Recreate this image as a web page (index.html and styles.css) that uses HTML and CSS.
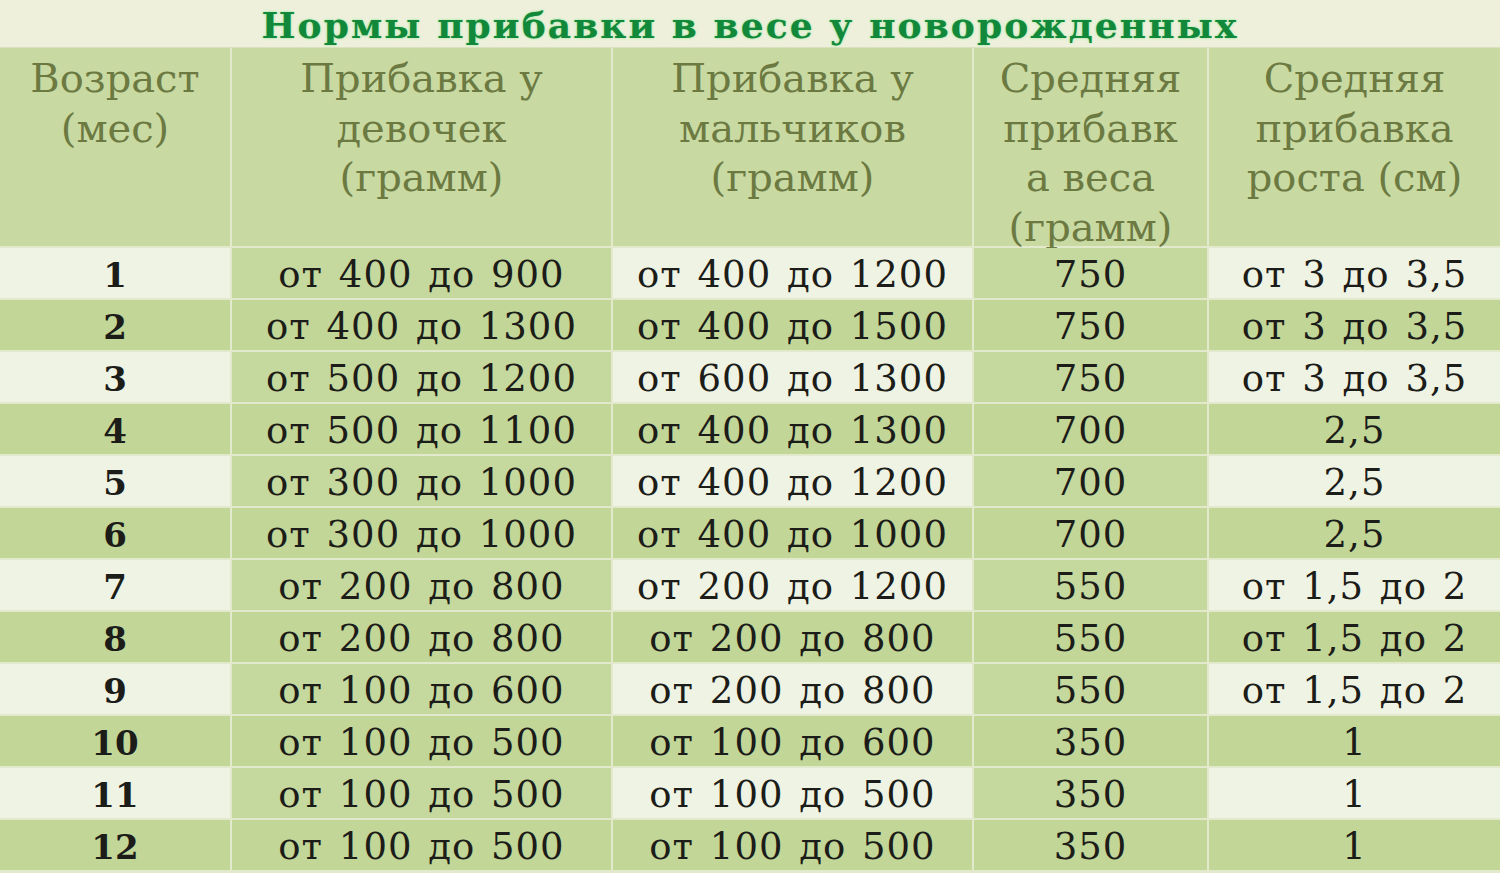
FILE: index.html
```html
<!DOCTYPE html>
<html lang="ru">
<head>
<meta charset="utf-8">
<title>Нормы прибавки в весе у новорожденных</title>
<link rel="stylesheet" href="styles.css">
</head>
<body>
<div class="page">
  <h1 class="title">Нормы прибавки в весе у новорожденных</h1>
  <div class="grid">
    <div class="th">Возраст<br>(мес)</div>
    <div class="th">Прибавка у<br>девочек<br>(грамм)</div>
    <div class="th">Прибавка у<br>мальчиков<br>(грамм)</div>
    <div class="th">Средняя<br>прибавк<br>а веса<br>(грамм)</div>
    <div class="th">Средняя<br>прибавка<br>роста (см)</div>

    <div class="td age light">1</div><div class="td green">от 400 до 900</div><div class="td light">от 400 до 1200</div><div class="td green">750</div><div class="td light">от 3 до 3,5</div>
    <div class="td age dark">2</div><div class="td dark">от 400 до 1300</div><div class="td dark">от 400 до 1500</div><div class="td dark">750</div><div class="td dark">от 3 до 3,5</div>
    <div class="td age light">3</div><div class="td green">от 500 до 1200</div><div class="td light">от 600 до 1300</div><div class="td green">750</div><div class="td light">от 3 до 3,5</div>
    <div class="td age dark">4</div><div class="td dark">от 500 до 1100</div><div class="td dark">от 400 до 1300</div><div class="td dark">700</div><div class="td dark">2,5</div>
    <div class="td age light">5</div><div class="td green">от 300 до 1000</div><div class="td light">от 400 до 1200</div><div class="td green">700</div><div class="td light">2,5</div>
    <div class="td age dark">6</div><div class="td dark">от 300 до 1000</div><div class="td dark">от 400 до 1000</div><div class="td dark">700</div><div class="td dark">2,5</div>
    <div class="td age light">7</div><div class="td green">от 200 до 800</div><div class="td light">от 200 до 1200</div><div class="td green">550</div><div class="td light">от 1,5 до 2</div>
    <div class="td age dark">8</div><div class="td dark">от 200 до 800</div><div class="td dark">от 200 до 800</div><div class="td dark">550</div><div class="td dark">от 1,5 до 2</div>
    <div class="td age light">9</div><div class="td green">от 100 до 600</div><div class="td light">от 200 до 800</div><div class="td green">550</div><div class="td light">от 1,5 до 2</div>
    <div class="td age dark">10</div><div class="td dark">от 100 до 500</div><div class="td dark">от 100 до 600</div><div class="td dark">350</div><div class="td dark">1</div>
    <div class="td age light">11</div><div class="td green">от 100 до 500</div><div class="td light">от 100 до 500</div><div class="td green">350</div><div class="td light">1</div>
    <div class="td age dark">12</div><div class="td dark">от 100 до 500</div><div class="td dark">от 100 до 500</div><div class="td dark">350</div><div class="td dark">1</div>
  </div>
</div>
</body>
</html>
```

FILE: styles.css
```css
html, body {
  margin: 0;
  padding: 0;
  background: #eef1dd;
}

.page {
  width: 1500px;
  height: 873px;
  overflow: hidden;
  display: flex;
  flex-direction: column;
}

.title {
  margin: 0;
  height: 48px;
  padding-top: 3px;
  box-sizing: border-box;
  display: flex;
  align-items: center;
  justify-content: center;
  background: #eef0dc;
  font-family: "DejaVu Serif", serif;
  font-weight: bold;
  font-size: 36px;
  letter-spacing: 2.1px;
  color: #12883a;
  text-shadow: 0 0 3px #a8eaa8, 0 0 1px #7bd88a;
  border-bottom: 1px solid #d9e2bd;
}

.grid {
  display: grid;
  grid-template-columns: 230px 379px 359px 233px 1fr;
  grid-template-rows: 198px repeat(12, 50px);
  column-gap: 2px;
  row-gap: 2px;
  background: #e2e9cd;
  flex: 1;
}

.th {
  background: #c8d9a2;
  color: #6c7a42;
  font-family: "DejaVu Serif", serif;
  font-size: 40px;
  line-height: 49.5px;
  text-align: center;
  padding-top: 6px;
}

.td {
  display: flex;
  align-items: center;
  justify-content: center;
  padding-top: 3px;
  font-family: "DejaVu Serif", serif;
  font-size: 37px;
  letter-spacing: 1px;
  word-spacing: 3px;
  color: #1c1c18;
}

.age {
  font-weight: bold;
  font-size: 34px;
  letter-spacing: 0;
}

.light {
  background: #eff3e3;
}

.green {
  background: #c5d89d;
}

.dark {
  background: #c2d698;
}
```
